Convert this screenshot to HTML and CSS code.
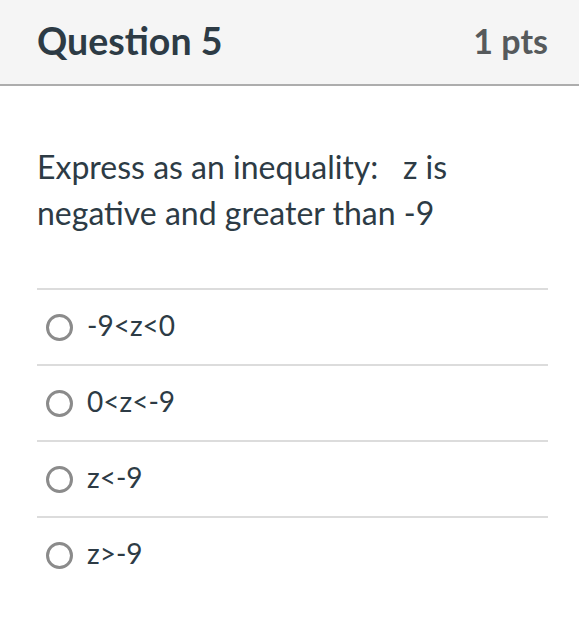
FILE: index.html
```html
<!DOCTYPE html>
<html>
<head>
<meta charset="utf-8">
<link rel="stylesheet" href="styles.css">
</head>
<body>
<div class="question">
  <div class="header">
    <div class="title">Question 5</div>
    <div class="points">1 pts</div>
  </div>
  <div class="body">
    <div class="text">Express as an inequality:&nbsp;&nbsp; z is negative and greater than -9</div>
    <div class="answers">
      <div class="answer"><span class="radio"></span><span class="label">-9&lt;z&lt;0</span></div>
      <div class="answer"><span class="radio"></span><span class="label">0&lt;z&lt;-9</span></div>
      <div class="answer"><span class="radio"></span><span class="label">z&lt;-9</span></div>
      <div class="answer"><span class="radio"></span><span class="label">z&gt;-9</span></div>
    </div>
  </div>
</div>
</body>
</html>
```

FILE: styles.css
```css
html, body {
  margin: 0;
  padding: 0;
  background: #fff;
  font-family: Lato, "Noto Sans", sans-serif;
  color: #2d3b45;
}
.header {
  display: flex;
  justify-content: space-between;
  align-items: center;
  height: 84px;
  padding: 0 31px 0 37px;
  background: #f5f5f5;
  border-bottom: 2px solid #adadad;
}
.title {
  font-size: 37.5px;
  font-weight: 700;
  color: #2d3b45;
  margin-top: -4px;
}
.points {
  font-size: 34px;
  font-weight: 700;
  color: #565a5c;
  margin-top: -4px;
}
.body {
  padding: 0 31px 0 37px;
}
.text {
  margin-top: 58px;
  font-size: 32px;
  line-height: 46px;
  width: 470px;
}
.answers {
  margin-top: 52px;
}
.answer {
  display: flex;
  align-items: center;
  height: 74px;
  border-top: 2px solid #dcdcdc;
}
.radio {
  width: 21px;
  height: 21px;
  border: 3px solid #8b8b8b;
  border-radius: 50%;
  margin-left: 9px;
  margin-right: 14px;
}
.label {
  font-size: 28px;
  margin-top: -4px;
}
```
